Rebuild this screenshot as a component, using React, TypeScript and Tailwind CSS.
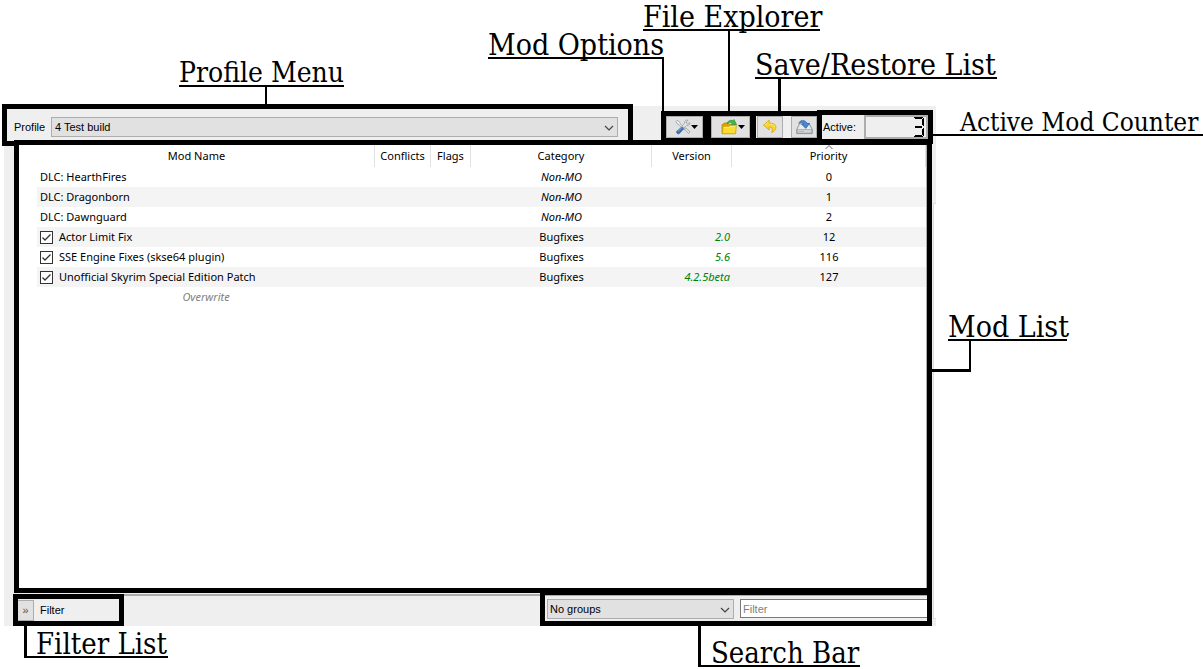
import React, { useState } from "react";

type Mod = {
  name: string;
  managed: boolean;
  category: string;
  version: string;
  priority: number;
};

const initialMods: Mod[] = [
  { name: "DLC: HearthFires", managed: false, category: "Non-MO", version: "", priority: 0 },
  { name: "DLC: Dragonborn", managed: false, category: "Non-MO", version: "", priority: 1 },
  { name: "DLC: Dawnguard", managed: false, category: "Non-MO", version: "", priority: 2 },
  { name: "Actor Limit Fix", managed: true, category: "Bugfixes", version: "2.0", priority: 12 },
  { name: "SSE Engine Fixes (skse64 plugin)", managed: true, category: "Bugfixes", version: "5.6", priority: 116 },
  { name: "Unofficial Skyrim Special Edition Patch", managed: true, category: "Bugfixes", version: "4.2.5beta", priority: 127 },
];

/* A highlighted part of the window; its callout is anchored to it. */
function Region({ className, children }: { className: string; children: React.ReactNode }) {
  return <section className={`relative outline-5 outline-black ${className}`}>{children}</section>;
}

function Callout({ className, children }: { className: string; children: React.ReactNode }) {
  return (
    <span
      className={`absolute border-b-2 border-black font-['DejaVu_Serif_Condensed','DejaVu_Serif',serif] leading-6 whitespace-nowrap text-black ${className}`}
    >
      {children}
    </span>
  );
}

function Leader({ className }: { className: string }) {
  return <span aria-hidden="true" className={`absolute bg-black ${className}`} />;
}

function Chevron() {
  return (
    <svg aria-hidden="true" viewBox="0 0 10 6" className="pointer-events-none absolute top-2 right-1 h-[6px] w-[10px]">
      <path d="M1 1 L5 5 L9 1" fill="none" stroke="#444" strokeWidth="1.2" />
    </svg>
  );
}

function DropArrow() {
  return (
    <svg aria-hidden="true" viewBox="0 0 7 4" className="h-1 w-[7px]">
      <path d="M0 0H7L3.5 4Z" fill="#000" />
    </svg>
  );
}

function ToolsIcon() {
  return (
    <svg aria-hidden="true" viewBox="0 0 16 16" className="size-4">
      <path d="M2.2 1.2 L4.8 3.2 L5 4.6 L10.2 9.6 L8.8 10.8 L4 5.8 L2.6 5.4 L1 2.6Z" fill="#eef0f1" stroke="#8b9297" strokeWidth=".7" />
      <path d="M9.4 10.2 L13.4 14.4 L15 13 L11 8.8Z" fill="#dfe3e5" stroke="#8b9297" strokeWidth=".7" />
      <path d="M14.6 3.6 L12.6 5 L11.4 4.2 L11.4 2.8 L13.2 1.2 C11.2 .5 9.2 2 9.6 4.4 L7.2 7 L9 8.8 L11.6 6.4 C13.6 6.8 15.4 5.4 14.6 3.6Z" fill="#e7eaec" stroke="#8b9297" strokeWidth=".7" />
      <path d="M6.8 8 L8.6 9.8 L4.4 14.4 C3 15.6 .8 13.8 2 12.2Z" fill="#3e73b8" stroke="#24508e" strokeWidth=".7" />
      <path d="M3 12.4 L6.8 8.9" stroke="#8db4e4" strokeWidth=".8" />
    </svg>
  );
}

function FolderIcon() {
  return (
    <svg aria-hidden="true" viewBox="0 0 17 16" className="h-4 w-[17px]">
      <path d="M1 14.5V5.4H2.2L3 4H7L8 5.4H14V14.5Z" fill="#d9a800" stroke="#b98c00" strokeWidth=".8" />
      <path d="M6 4.8C6.6 1.8 9.4 .6 12.2 1.7L13 .5L15.6 5.6L10.4 5.8L11.4 4C9.6 3.2 7.6 3.6 6 4.8Z" fill="#45b549" stroke="#238b37" strokeWidth=".6" />
      <path d="M1.4 14.8L2 7.4H8L9 6.4H15.4L14.6 14.8Z" fill="#fbdc30" stroke="#cda20a" strokeWidth=".8" />
      <path d="M2.8 8.3H8.5L9.5 7.3H14.5" fill="none" stroke="#fff3a0" strokeWidth=".7" />
    </svg>
  );
}

function UndoIcon() {
  return (
    <svg aria-hidden="true" viewBox="0 0 16 16" className="size-4">
      <path
        d="M7.2 1.2L1.6 6.2L7.2 11V8.2C10 8 11 9.4 9.8 13.6C13.4 11.8 14.6 9 13.6 6.8C12.6 4.6 10.2 4 7.2 4.2Z"
        fill="#f9d32c"
        stroke="#d5a400"
        strokeWidth=".8"
        strokeLinejoin="round"
      />
      <path d="M6.4 3.2L3 6.2M7.2 5.1C10.4 4.9 12.4 6 12.8 8" fill="none" stroke="#fff0a0" strokeWidth=".7" />
    </svg>
  );
}

function SaveIcon() {
  return (
    <svg aria-hidden="true" viewBox="0 0 17 16" className="h-4 w-[17px]">
      <path d="M3.6 4.8H13.2L16.2 10.4V14.6H.8V10.4Z" fill="#e9ebec" stroke="#777d83" strokeWidth=".8" strokeLinejoin="round" />
      <path d="M1.2 10.6H15.8V14.2H1.2Z" fill="#d2d5d7" stroke="#858b91" strokeWidth=".6" />
      <path d="M3 12.4H8" stroke="#a5abb0" strokeWidth=".8" />
      <path d="M2.8 4.4C4 1 8.4 -.2 11.2 4.4H13.6L9.8 9.4L5.6 5.2H7.8C6.8 3.2 4.6 2.8 2.8 4.4Z" fill="#4b86d0" stroke="#2c5fa6" strokeWidth=".7" strokeLinejoin="round" />
    </svg>
  );
}

function LcdThree() {
  return (
    <svg role="img" aria-label="3" viewBox="0 0 10 20" className="h-5 w-[10px] shrink-0">
      <path d="M0 0H9V1H8V2H1V1H0ZM1 9H8V11H1ZM0 20H9V19H8V18H1V19H0ZM8 2H9V1H10V9H9V8H8ZM8 12H9V11H10V19H9V18H8Z" fill="#000" />
    </svg>
  );
}

const toolButton = "flex h-[22px] items-center justify-center border border-[#adadad] bg-[#e1e1e1]";
const headCell = "border-r border-[#e2e2e2] p-0 font-normal";

export default function App() {
  const [enabled, setEnabled] = useState<Record<string, boolean>>(
    Object.fromEntries(initialMods.map((m) => [m.name, m.managed])),
  );

  return (
    <main className="min-h-screen overflow-hidden bg-white pt-[106px] pr-[267px] pb-[43px] pl-1 font-['Liberation_Sans',Arial,sans-serif] text-[11px] leading-5 text-black">
      <div className="relative flex flex-col bg-[#efefef]">
        <div aria-hidden="true" className="absolute top-[97px] right-0 bottom-[7px] w-[3px] border-t border-b border-l border-[#dcdcdc] bg-white" />

        <header className="flex h-[39px] items-start pt-[3px] pr-2 pl-[3px]">
          <Region className="flex h-8 min-w-0 flex-1 items-center pt-1 pr-[10px] pl-[7px]">
            <label htmlFor="profile" className="w-[37px] shrink-0">
              Profile
            </label>
            <div className="relative flex-1">
              <select id="profile" className="block h-5 w-full appearance-none border border-[#adadad] bg-[#e1e1e1] px-[3px] leading-4">
                <option>4 Test build</option>
              </select>
              <Chevron />
            </div>
            <Callout className="bottom-[54px] left-[172px] w-[165px] text-[28px]">Profile Menu</Callout>
            <Leader className="bottom-[37px] left-[258px] h-[17px] w-[2px]" />
          </Region>

          <Region className="mt-[7px] ml-[38px] w-[37px]">
            <button aria-label="Mod options" className={`${toolButton} w-full pl-1`}>
              <ToolsIcon />
              <DropArrow />
            </button>
            <Callout className="right-[39px] bottom-[79px] w-[176px] text-[30px]">Mod Options</Callout>
            <Leader className="right-[39px] bottom-[27px] h-[54px] w-[2px]" />
          </Region>

          <Region className="mt-[7px] ml-2 w-[39px]">
            <button aria-label="Open folder" className={`${toolButton} w-full pl-1`}>
              <FolderIcon />
              <DropArrow />
            </button>
            <Callout className="bottom-[107px] left-[-68px] w-[177px] text-[30px]">File Explorer</Callout>
            <Leader className="bottom-[27px] left-[17px] h-[80px] w-[2px]" />
          </Region>

          <Region className="mt-[7px] ml-[6px] flex w-[61px] justify-between pl-px">
            <button aria-label="Restore list" className={`${toolButton} w-[26px]`}>
              <UndoIcon />
            </button>
            <button aria-label="Save list" className={`${toolButton} w-[26px]`}>
              <SaveIcon />
            </button>
            <Callout className="bottom-[59px] left-[-1px] w-[242px] text-[30px]">Save/Restore List</Callout>
            <Leader className="bottom-[27px] left-[22px] h-8 w-[3px]" />
          </Region>

          <Region className="mt-[6px] ml-[5px] flex h-6 w-[106px] items-center justify-between pl-[1px]">
            <span>Active:</span>
            <output className="flex h-6 w-[64px] items-center justify-end border-2 border-[#adadad] pr-[2px]">
              <LcdThree />
            </output>
            <Callout className="bottom-[3px] left-[111px] w-[270px] pl-[27px] text-[26px]">Active Mod Counter</Callout>
          </Region>
        </header>

        <Region className="mr-[9px] ml-[15px] min-h-[443px] border-r border-[#adadad] bg-white font-['Noto_Sans','Open_Sans',sans-serif]">
          <table className="w-full table-fixed border-separate border-spacing-0">
            <colgroup>
              <col className="w-[18px]" />
              <col className="w-[338px]" />
              <col className="w-[56px]" />
              <col className="w-[40px]" />
              <col className="w-[181px]" />
              <col className="w-[80px]" />
              <col />
            </colgroup>
            <thead>
              <tr className="h-[22px]">
                <th colSpan={2} className={headCell}>Mod Name</th>
                <th className={headCell}>Conflicts</th>
                <th className={headCell}>Flags</th>
                <th className={headCell}>Category</th>
                <th className={headCell}>Version</th>
                <th className={`relative ${headCell}`}>
                  <svg aria-hidden="true" viewBox="0 0 8 4" className="absolute inset-x-0 top-0 mx-auto h-1 w-2">
                    <path d="M.5 4L4 .5L7.5 4" fill="none" stroke="#666" />
                  </svg>
                  Priority
                </th>
              </tr>
            </thead>
            <tbody>
              {initialMods.map((mod) => (
                <tr key={mod.name} className="group h-5">
                  <td className="p-0" />
                  <td className="p-0 pl-[3px] group-even:bg-[#f4f4f4]">
                    {mod.managed ? (
                      <label className="flex items-center gap-[6px]">
                        <span className="relative flex">
                          <input
                            type="checkbox"
                            checked={enabled[mod.name]}
                            onChange={(e) => setEnabled({ ...enabled, [mod.name]: e.target.checked })}
                            className="peer size-[13px] appearance-none border border-[#333] bg-white"
                          />
                          <svg aria-hidden="true" viewBox="0 0 13 13" className="pointer-events-none absolute inset-0 hidden size-[13px] peer-checked:block">
                            <path d="M2.5 6.5L5 9L10.5 3.5" fill="none" stroke="#333" strokeWidth="1.3" />
                          </svg>
                        </span>
                        {mod.name}
                      </label>
                    ) : (
                      mod.name
                    )}
                  </td>
                  <td className="p-0 group-even:bg-[#f4f4f4]" />
                  <td className="p-0 group-even:bg-[#f4f4f4]" />
                  <td className={`p-0 text-center group-even:bg-[#f4f4f4] ${mod.managed ? "" : "italic"}`}>{mod.category}</td>
                  <td className="p-0 pr-[2px] text-right text-[#008000] italic group-even:bg-[#f4f4f4]">{mod.version}</td>
                  <td className="p-0 text-center group-even:bg-[#f4f4f4]">{mod.priority}</td>
                </tr>
              ))}
              <tr className="h-5">
                <td className="p-0" />
                <td className="p-0 text-center text-[#808080] italic">Overwrite</td>
                <td colSpan={5} className="p-0" />
              </tr>
            </tbody>
          </table>
          <Callout className="top-[170px] left-[929px] w-[119px] text-[30px]">Mod List</Callout>
          <Leader className="top-[194px] left-[950px] h-[33px] w-[2px]" />
          <Leader className="top-[224px] left-[913px] h-[3px] w-[39px]" />
        </Region>

        <footer className="mt-[6px] mr-1 ml-[10px] flex h-8 items-start justify-between border-t-2 border-[#adadad] pr-[5px] pl-1">
          <Region className="mt-[3px] flex h-[22px] w-[101px] items-center gap-[6px]">
            <button aria-label="Show filters" className="h-[21px] w-4 border border-l-0 border-[#adadad] bg-[#e1e1e1] leading-4 text-[#7a4a10]">
              »
            </button>
            <span>Filter</span>
            <Callout className="top-[33px] left-[6px] w-[144px] pl-3 text-[29px]">Filter List</Callout>
            <Leader className="top-[27px] left-[6px] h-8 w-[3px]" />
          </Region>

          <Region className="-mt-px flex h-[26px] w-[382px] gap-[6px] pt-1 pl-[2px]">
            <div className="relative w-[187px]">
              <select aria-label="Grouping" className="block h-5 w-full appearance-none border border-[#adadad] bg-[#e1e1e1] px-[2px] leading-4">
                <option>No groups</option>
              </select>
              <Chevron />
            </div>
            <input
              aria-label="Filter mods"
              placeholder="Filter"
              className="h-[19px] min-w-0 flex-1 border border-r-0 border-[#7a7a7a] bg-white px-[2px] leading-4 placeholder:text-[#808080]"
            />
            <Callout className="top-[46px] left-[153px] w-[162px] pl-[13px] text-[29px]">Search Bar</Callout>
            <Leader className="top-[31px] left-[153px] h-[41px] w-[3px]" />
          </Region>
        </footer>
      </div>
    </main>
  );
}
